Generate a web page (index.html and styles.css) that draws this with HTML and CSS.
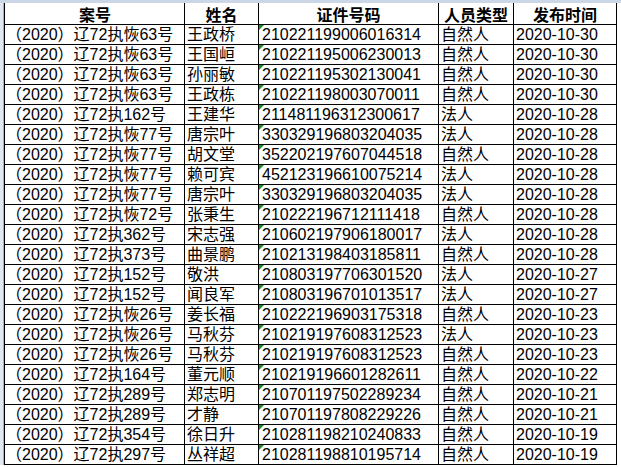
FILE: index.html
```html
<!DOCTYPE html>
<html lang="zh">
<head>
<meta charset="utf-8">
<link rel="stylesheet" href="styles.css">
</head>
<body>
<div class="topbar"></div>
<div class="sheet">
  <div class="side"></div>
  <div class="grid">
    <div class="h c1">案号</div><div class="h c2">姓名</div><div class="h c3">证件号码</div><div class="h c4">人员类型</div><div class="h c5">发布时间</div>

    <div class="c c1">（2020）辽72执恢63号</div><div class="c">王政桥</div><div class="c id">210221199006016314</div><div class="c">自然人</div><div class="c">2020-10-30</div>
    <div class="c c1">（2020）辽72执恢63号</div><div class="c">王国峘</div><div class="c id">210221195006230013</div><div class="c">自然人</div><div class="c">2020-10-30</div>
    <div class="c c1">（2020）辽72执恢63号</div><div class="c">孙丽敏</div><div class="c id">210221195302130041</div><div class="c">自然人</div><div class="c">2020-10-30</div>
    <div class="c c1">（2020）辽72执恢63号</div><div class="c">王政栋</div><div class="c id">210221198003070011</div><div class="c">自然人</div><div class="c">2020-10-30</div>
    <div class="c c1">（2020）辽72执162号</div><div class="c">王建华</div><div class="c id">211481196312300617</div><div class="c">法人</div><div class="c">2020-10-28</div>
    <div class="c c1">（2020）辽72执恢77号</div><div class="c">唐宗叶</div><div class="c id">330329196803204035</div><div class="c">法人</div><div class="c">2020-10-28</div>
    <div class="c c1">（2020）辽72执恢77号</div><div class="c">胡文堂</div><div class="c id">352202197607044518</div><div class="c">自然人</div><div class="c">2020-10-28</div>
    <div class="c c1">（2020）辽72执恢77号</div><div class="c">赖可宾</div><div class="c id">452123196610075214</div><div class="c">法人</div><div class="c">2020-10-28</div>
    <div class="c c1">（2020）辽72执恢77号</div><div class="c">唐宗叶</div><div class="c id">330329196803204035</div><div class="c">法人</div><div class="c">2020-10-28</div>
    <div class="c c1">（2020）辽72执恢72号</div><div class="c">张秉生</div><div class="c id">210222196712111418</div><div class="c">自然人</div><div class="c">2020-10-28</div>
    <div class="c c1">（2020）辽72执362号</div><div class="c">宋志强</div><div class="c id">210602197906180017</div><div class="c">法人</div><div class="c">2020-10-28</div>
    <div class="c c1">（2020）辽72执373号</div><div class="c">曲景鹏</div><div class="c id">210213198403185811</div><div class="c">自然人</div><div class="c">2020-10-28</div>
    <div class="c c1">（2020）辽72执152号</div><div class="c">敬洪</div><div class="c id">210803197706301520</div><div class="c">法人</div><div class="c">2020-10-27</div>
    <div class="c c1">（2020）辽72执152号</div><div class="c">闻良军</div><div class="c id">210803196701013517</div><div class="c">法人</div><div class="c">2020-10-27</div>
    <div class="c c1">（2020）辽72执恢26号</div><div class="c">姜长福</div><div class="c id">210222196903175318</div><div class="c">自然人</div><div class="c">2020-10-23</div>
    <div class="c c1">（2020）辽72执恢26号</div><div class="c">马秋芬</div><div class="c id">210219197608312523</div><div class="c">法人</div><div class="c">2020-10-23</div>
    <div class="c c1">（2020）辽72执恢26号</div><div class="c">马秋芬</div><div class="c id">210219197608312523</div><div class="c">自然人</div><div class="c">2020-10-23</div>
    <div class="c c1">（2020）辽72执164号</div><div class="c">董元顺</div><div class="c id">210219196601282611</div><div class="c">自然人</div><div class="c">2020-10-22</div>
    <div class="c c1">（2020）辽72执289号</div><div class="c">郑志明</div><div class="c id">210701197502289234</div><div class="c">自然人</div><div class="c">2020-10-21</div>
    <div class="c c1">（2020）辽72执289号</div><div class="c">才静</div><div class="c id">210701197808229226</div><div class="c">自然人</div><div class="c">2020-10-21</div>
    <div class="c c1">（2020）辽72执354号</div><div class="c">徐日升</div><div class="c id">210281198210240833</div><div class="c">自然人</div><div class="c">2020-10-19</div>
    <div class="c c1">（2020）辽72执297号</div><div class="c">丛祥超</div><div class="c id">210281198810195714</div><div class="c">自然人</div><div class="c">2020-10-19</div>
  </div>
</div>
</body>
</html>
```

FILE: styles.css
```css
html, body {
  margin: 0;
  padding: 0;
  background: #ffffff;
  width: 621px;
  height: 467px;
  overflow: hidden;
}
body {
  font-family: "Liberation Sans", "Noto Sans CJK SC", sans-serif;
  font-size: 16px;
  color: #000000;
}
.topbar {
  height: 3px;
  background: #cbd7e6;
}
.sheet {
  display: flex;
}
.side {
  width: 4px;
  background: #e1e8f1;
  border-right: 1px solid #9fb2c8;
}
.grid {
  display: grid;
  grid-template-columns: 180px 74px 180px 75px 103px;
  grid-template-rows: 22px repeat(22, 20px);
  border-left: 1px solid #000;
  padding-right: 4px;
  background: #fff;
}
.h, .c {
  box-sizing: border-box;
  border-right: 1px solid #000;
  border-bottom: 1px solid #000;
  white-space: nowrap;
  position: relative;
}
.h {
  font-weight: bold;
  text-align: center;
  display: flex;
  align-items: center;
  justify-content: center;
  line-height: 20px;
  font-family: "Noto Sans CJK SC", sans-serif;
  font-size: 16px;
}
.c {
  line-height: 19px;
  padding-left: 2px;
  overflow: hidden;
}
.c1 {
  padding-left: 1px;
}
.id {
  padding-left: 3px;
}
.id::before {
  content: "";
  position: absolute;
  left: 0;
  top: 0;
  width: 0;
  height: 0;
  border-top: 5px solid #1f8a2a;
  border-right: 5px solid transparent;
}
```
